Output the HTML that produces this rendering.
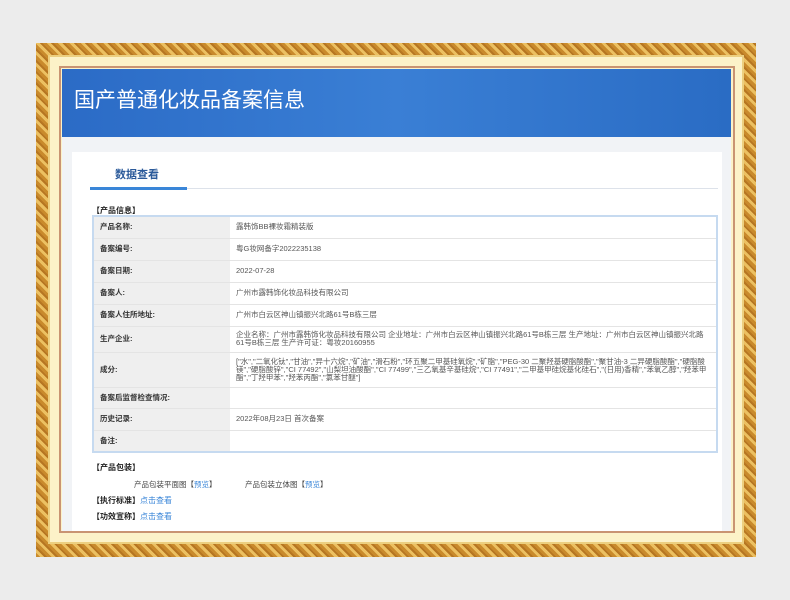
<!DOCTYPE html>
<html><head><meta charset="utf-8"><style>
*{margin:0;padding:0;box-sizing:border-box}
body{width:790px;height:600px;background:#ececec;position:relative;overflow:hidden;font-family:"Liberation Sans","Noto Sans CJK SC",sans-serif;}
.gold{position:absolute;left:36px;top:43px;width:720px;height:514px;background:repeating-linear-gradient(45deg,#c98a2c 0 3px,#ecc061 3px 6px,#b67622 6px 8px);}
.mat{position:absolute;left:48px;top:55px;width:696px;height:489px;background:#fcf2c8;border:2px solid #eccf80;}
.line{position:absolute;left:59px;top:66px;width:676px;height:467px;border:2px solid #c99472;}
.content{position:absolute;left:62px;top:69px;width:669px;height:462px;background:#f1f3f6;overflow:hidden;}
.hdr{height:68px;background:linear-gradient(90deg,#2b6bc6,#3a7fd5 50%,#2a6cc4);color:#fff;font-size:21px;padding:15px 0 0 12px;font-family:"Noto Sans CJK SC",sans-serif;}
.panel{position:absolute;left:10px;top:83px;width:650px;height:400px;background:#fff;}
.tab{position:absolute;left:43px;top:14px;font-size:11px;font-weight:bold;color:#2b5a9a;}
.tabline{position:absolute;left:18px;top:36px;width:628px;height:1px;background:#dde2ea;}
.tabbar{position:absolute;left:18px;top:35px;width:97px;height:3px;background:#3a86d8;}
.sec{position:absolute;font-size:8px;font-weight:bold;color:#222;}
table{position:absolute;left:20px;top:63px;width:626px;border-collapse:collapse;border:2px solid #c6daf0;font-size:7.5px;}
td{border-bottom:1px solid #e4e4e4;padding:0 6px;color:#555;line-height:8px;}
td.l{width:137px;background:#efefef;font-weight:bold;color:#333;}
a{color:#3a86d8;text-decoration:none}
.t{position:absolute;font-size:7.5px;color:#444}
</style></head><body>
<div class="gold"></div><div class="mat"></div><div class="line"></div>
<div class="content">
<div class="hdr">国产普通化妆品备案信息</div>
<div class="panel">
<div class="tab">数据查看</div><div class="tabline"></div><div class="tabbar"></div>
<div class="sec" style="left:20px;top:53px">【产品信息】</div>
<table>
<tr style="height:22px"><td class="l">产品名称:</td><td>露韩饰BB裸妆霜精装版</td></tr>
<tr style="height:22px"><td class="l">备案编号:</td><td>粤G妆网备字2022235138</td></tr>
<tr style="height:22px"><td class="l">备案日期:</td><td>2022-07-28</td></tr>
<tr style="height:22px"><td class="l">备案人:</td><td>广州市露韩饰化妆品科技有限公司</td></tr>
<tr style="height:22px"><td class="l">备案人住所地址:</td><td>广州市白云区神山镇振兴北路61号B栋三层</td></tr>
<tr style="height:26px"><td class="l">生产企业:</td><td>企业名称：广州市露韩饰化妆品科技有限公司 企业地址：广州市白云区神山镇振兴北路61号B栋三层 生产地址：广州市白云区神山镇振兴北路61号B栋三层 生产许可证：粤妆20160955</td></tr>
<tr style="height:35px"><td class="l">成分:</td><td>["水","二氧化钛","甘油","异十六烷","矿油","滑石粉","环五聚二甲基硅氧烷","矿脂","PEG-30 二聚羟基硬脂酸酯","聚甘油-3 二异硬脂酸酯","硬脂酸镁","硬脂酸锌","CI 77492","山梨坦油酸酯","CI 77499","三乙氧基辛基硅烷","CI 77491","二甲基甲硅烷基化硅石","(日用)香精","苯氧乙醇","羟苯甲酯","丁羟甲苯","羟苯丙酯","氯苯甘醚"]</td></tr>
<tr style="height:21px"><td class="l">备案后监督检查情况:</td><td></td></tr>
<tr style="height:22px"><td class="l">历史记录:</td><td>2022年08月23日 首次备案</td></tr>
<tr style="height:22px"><td class="l">备注:</td><td></td></tr>
</table>
<div class="sec" style="left:20px;top:310px">【产品包装】</div>
<div class="t" style="left:62px;top:327px">产品包装平面图【<a>预览</a>】</div>
<div class="t" style="left:173px;top:327px">产品包装立体图【<a>预览</a>】</div>
<div class="sec" style="left:20px;top:343px">【执行标准】<a style="font-weight:normal">点击查看</a></div>
<div class="sec" style="left:20px;top:359px">【功效宣称】<a style="font-weight:normal">点击查看</a></div>
</div>
</div>
</body></html>
